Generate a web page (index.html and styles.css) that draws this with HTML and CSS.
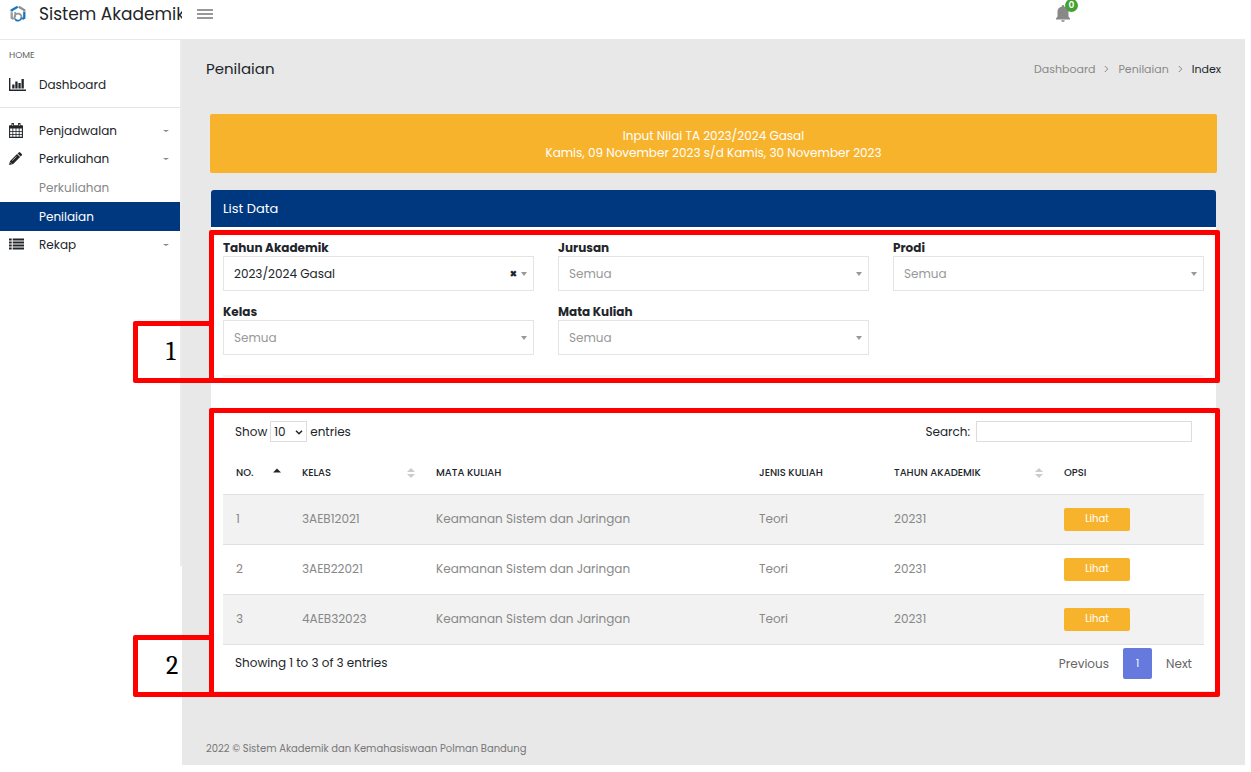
FILE: index.html
```html
<!DOCTYPE html>
<html lang="id">
<head>
  <meta charset="UTF-8">
  <meta name="viewport" content="width=device-width, initial-scale=1.0">
  <title>Sistem Akademik - Penilaian</title>
  <link rel="stylesheet" href="styles.css">
</head>
<body>

  <header class="topbar">
    <a class="brand" href="#">
      <svg class="brand-logo" viewBox="0 0 16 18" width="16" height="18" fill="none" stroke-width="2.3">
        <path d="M1.700 6.500V5.200L7.700 1.700" stroke="#1c75bc"/>
        <path d="M8.700 1.800l5.600 3.300v1.400" stroke="#8a8f94"/>
        <path d="M14.300 6.800v6l-2 1.200" stroke="#1c75bc"/>
        <path d="M1.700 7.200v5.600l2 1.200" stroke="#9a9a9a"/>
        <path d="M5.200 7v5" stroke="#9a9a9a" stroke-width="1.800"/>
        <path d="M5.200 14.200A3.500 3.500 0 1 1 11.400 13" stroke="#8f959b" stroke-width="1.800"/>
        <path d="M11.500 12.500A3.500 3.500 0 0 1 5.200 14.200" stroke="#1c75bc" stroke-width="1.800"/>
      </svg>
      <span>Sistem Akademik</span>
    </a>
    <button class="menu-toggle" type="button" aria-label="Menu">
      <svg viewBox="0 0 16 10" width="16" height="10" stroke="#777" stroke-width="1.4">
        <path d="M0 1h16M0 5h16M0 9h16"/>
      </svg>
    </button>
    <button class="bell" type="button" aria-label="Notifikasi">
      <svg viewBox="0 0 16 18" width="16" height="18" fill="#888">
        <path d="M8 0a1.200 1.200 0 0 1 1.200 1.200v.4C11.700 2.100 13.500 4.100 13.500 6.500v5l1.500 2v1H1v-1l1.500-2v-5c0-2.400 1.800-4.400 4.300-4.900v-.4A1.200 1.200 0 0 1 8 0zM6.200 15.200h3.600a1.800 1.800 0 0 1-3.600 0z"/>
      </svg>
      <span class="badge">0</span>
    </button>
  </header>

  <div class="layout">
    <aside class="sidebar">
      <nav class="menu">
        <p class="menu-title">HOME</p>
        <a class="menu-item" href="#">
          <svg class="menu-icon" viewBox="0 0 17 14" width="17" height="14" fill="#212529">
            <path d="M0 1h1.400v11.600H17V14H0zM3.200 7.500h2.300v4H3.200zM6.300 4.500h2.300v7H6.300zM9.400 6h2.300v5.500H9.400zM12.500 2h2.300v9.500h-2.300z"/>
          </svg>
          <span>Dashboard</span>
        </a>
        <hr class="menu-line">
        <a class="menu-item has-child" href="#">
          <svg class="menu-icon" viewBox="0 0 14 15" width="14" height="15">
            <path d="M.6 3h12.800v11.400H.6z" fill="#fff" stroke="#212529" stroke-width="1.100"/>
            <path d="M.5 2.500h13v3H.5z" fill="#212529"/>
            <path d="M.5 8.500h13M.5 11.500h13M3.800 5v9.500M7 5v9.500M10.200 5v9.500" stroke="#212529" stroke-width=".8"/>
            <path d="M2.500 0h2.400v3.600H2.500zM9.100 0h2.400v3.600H9.100z" fill="#212529"/>
            <path d="M3.700 1v2M10.300 1v2" stroke="#fff" stroke-width=".6"/>
          </svg>
          <span>Penjadwalan</span>
        </a>
        <a class="menu-item has-child" href="#">
          <svg class="menu-icon" viewBox="0 0 13 13" width="13" height="13" fill="#212529">
            <path d="M8.600 1.500l3 3 1.100-1.100a1 1 0 0 0 0-1.400L11.200.4a1 1 0 0 0-1.400 0zM8 2l3.100 3.100-6.900 6.900L0 13l1.100-4.100z"/>
            <path d="M1.500 10.400l1.200 1.200M3.200 8.700l4.300-4.300" stroke="#fff" stroke-width=".6"/>
          </svg>
          <span>Perkuliahan</span>
        </a>
        <a class="menu-item sub" href="#">Perkuliahan</a>
        <a class="menu-item sub active" href="#">Penilaian</a>
        <a class="menu-item has-child" href="#">
          <svg class="menu-icon" viewBox="0 0 15 12" width="15" height="12" stroke="#212529" stroke-width="2.200">
            <path d="M0 1.500h2.700M3.700 1.500H15M0 4.500h2.700M3.700 4.500H15M0 7.500h2.700M3.700 7.500H15M0 10.500h2.700M3.700 10.500H15"/>
          </svg>
          <span>Rekap</span>
        </a>
      </nav>
    </aside>

    <main class="content">
      <div class="page-head">
        <h1>Penilaian</h1>
        <nav class="breadcrumb">
          <a href="#">Dashboard</a>
          <svg viewBox="0 0 5 8" width="5" height="8"><path d="M.8 1l3 3-3 3"/></svg>
          <a href="#">Penilaian</a>
          <svg viewBox="0 0 5 8" width="5" height="8"><path d="M.8 1l3 3-3 3"/></svg>
          <b>Index</b>
        </nav>
      </div>

      <div class="banner">
        <p>Input Nilai TA 2023/2024 Gasal</p>
        <p>Kamis, 09 November 2023 s/d Kamis, 30 November 2023</p>
      </div>

      <section class="card">
        <h2 class="card-head">List Data</h2>

        <div class="filter">
          <div class="filter-grid">
            <div class="field">
              <label for="tahun">Tahun Akademik</label>
              <div class="select-wrap">
                <select id="tahun" class="filled"><option>2023/2024 Gasal</option></select>
                <button class="clear" type="button" aria-label="Hapus">×</button>
              </div>
            </div>
            <div class="field">
              <label for="jurusan">Jurusan</label>
              <div class="select-wrap">
                <select id="jurusan"><option>Semua</option></select>
              </div>
            </div>
            <div class="field">
              <label for="prodi">Prodi</label>
              <div class="select-wrap">
                <select id="prodi"><option>Semua</option></select>
              </div>
            </div>
            <div class="field">
              <label for="kelas">Kelas</label>
              <div class="select-wrap">
                <select id="kelas"><option>Semua</option></select>
              </div>
            </div>
            <div class="field">
              <label for="matkul">Mata Kuliah</label>
              <div class="select-wrap">
                <select id="matkul"><option>Semua</option></select>
              </div>
            </div>
          </div>
          <hr class="filter-line">
          <div class="mark"></div>
          <div class="mark-number">1</div>
        </div>

        <div class="list">
          <div class="list-tools">
            <div class="length">
              <label for="length">Show</label>
              <span class="length-wrap">
                <select id="length"><option>10</option></select>
                <svg class="chevron" viewBox="0 0 8 5" width="8" height="5" fill="none" stroke="#212529" stroke-width="1.500"><path d="M1 .8l3 3 3-3"/></svg>
              </span>
              <span>entries</span>
            </div>
            <div class="search">
              <label for="search">Search:</label>
              <input id="search" type="search">
            </div>
          </div>

          <table class="data">
            <thead>
              <tr>
                <th class="col-no"><div class="th">NO.<svg viewBox="0 0 8 10" width="8" height="10" fill="#212529"><path d="M0 4.500 4 .5l4 4z"/></svg></div></th>
                <th class="col-kelas"><div class="th">KELAS<svg viewBox="0 0 8 10" width="8" height="10" fill="#ccc"><path d="M0 4 4 0l4 4zM0 6h8l-4 4z"/></svg></div></th>
                <th>MATA KULIAH</th>
                <th class="col-jenis">JENIS KULIAH</th>
                <th class="col-tahun"><div class="th">TAHUN AKADEMIK<svg viewBox="0 0 8 10" width="8" height="10" fill="#ccc"><path d="M0 4 4 0l4 4zM0 6h8l-4 4z"/></svg></div></th>
                <th class="col-opsi">OPSI</th>
              </tr>
            </thead>
            <tbody>
              <tr>
                <td>1</td>
                <td>3AEB12021</td>
                <td>Keamanan Sistem dan Jaringan</td>
                <td>Teori</td>
                <td>20231</td>
                <td><button class="btn" type="button">Lihat</button></td>
              </tr>
              <tr>
                <td>2</td>
                <td>3AEB22021</td>
                <td>Keamanan Sistem dan Jaringan</td>
                <td>Teori</td>
                <td>20231</td>
                <td><button class="btn" type="button">Lihat</button></td>
              </tr>
              <tr>
                <td>3</td>
                <td>4AEB32023</td>
                <td>Keamanan Sistem dan Jaringan</td>
                <td>Teori</td>
                <td>20231</td>
                <td><button class="btn" type="button">Lihat</button></td>
              </tr>
            </tbody>
          </table>

          <div class="list-foot">
            <span>Showing 1 to 3 of 3 entries</span>
            <div class="pages">
              <a href="#">Previous</a>
              <a class="current" href="#">1</a>
              <a href="#">Next</a>
            </div>
          </div>
          <div class="mark"></div>
          <div class="mark-number">2</div>
        </div>
      </section>

      <footer class="footer">2022 © Sistem Akademik dan Kemahasiswaan Polman Bandung</footer>
    </main>
  </div>

</body>
</html>
```
FILE: styles.css
```css
* {
  box-sizing: border-box;
}
body {
  margin: 0;
  padding: 0 6px 7px 0;
  background-color: #fff;
  color: #212529;
  font-family: Poppins, Inter, sans-serif;
  font-size: 12px;
}
a {
  color: inherit;
  text-decoration: none;
}
h1, h2, p {
  margin: 0;
  font-weight: 400;
}
button, select, input {
  font: inherit;
  color: inherit;
}

/* top bar */
.topbar {
  display: flex;
  align-items: center;
  padding-bottom: 11px;
  border-bottom: 1px solid #e8e8e8;
}
.brand {
  display: flex;
  align-items: center;
  gap: 13px;
  width: 182px;
  padding-left: 10px;
  overflow: hidden;
  white-space: nowrap;
  font-size: 17px;
  line-height: 28px;
}
.brand-logo {
  flex: none;
}
.menu-toggle, .bell {
  display: flex;
  padding: 0;
  border: none;
  background: none;
  cursor: pointer;
}
.menu-toggle {
  margin-left: 15px;
}
.bell {
  position: relative;
  margin-left: auto;
  margin-right: 174px;
}
.badge {
  position: absolute;
  top: -6px;
  right: -7px;
  width: 13px;
  height: 13px;
  border-radius: 50%;
  background-color: #43a233;
  color: #fff;
  font-size: 9px;
  font-weight: 600;
  line-height: 13px;
  text-align: center;
}

/* sidebar */
.layout {
  display: flex;
}
.sidebar {
  flex: none;
  width: 182px;
}
.menu {
  padding-top: 6px;
  min-height: 526px;
  border-right: 2px solid #ebebeb;
}
.menu-title {
  padding-left: 9px;
  margin-bottom: 7px;
  color: #666;
  font-size: 9px;
  line-height: 18px;
}
.menu-item {
  display: flex;
  align-items: center;
  height: 28px;
  padding-left: 9px;
}
.menu-icon {
  flex: none;
  margin-bottom: 2px;
}
.menu-item span {
  position: absolute;
  margin-left: 30px;
}
.menu-line {
  margin: 8px 0 9px;
  border: none;
  border-top: 1px solid #e5e5e5;
}
.has-child::after {
  content: "";
  margin-left: auto;
  margin-right: 11px;
  border: 3px solid transparent;
  border-top: 2px solid #888;
  border-bottom: none;
}
.sub {
  height: 29px;
  padding-left: 39px;
  color: #888;
}
.sub.active {
  background-color: #003880;
  color: #fff;
}

/* content */
.content {
  flex: 1;
  min-width: 0;
  padding: 17px 24px 7px;
  background-color: #e8e8e8;
}
.page-head {
  display: flex;
  justify-content: space-between;
  align-items: center;
  margin-bottom: 33px;
  line-height: 24px;
}
.page-head h1 {
  font-size: 15px;
}
.breadcrumb {
  display: flex;
  align-items: center;
  gap: 9px;
  color: #888;
  font-size: 11px;
}
.breadcrumb svg {
  fill: none;
  stroke: #888;
}
.breadcrumb b {
  color: #212529;
  font-weight: 400;
}
.banner {
  margin: 0 4px 17px;
  padding: 13px 0 12px;
  border-radius: 2px;
  background-color: #f8b32d;
  color: #fff;
  line-height: 17px;
  text-align: center;
}
.card {
  margin: 0 5px;
  border-radius: 3px;
  background-color: #fff;
}
.card-head {
  padding: 0 12px;
  border-radius: 3px 3px 0 0;
  background-color: #003880;
  color: #fff;
  font-size: 13px;
  line-height: 37px;
}

/* filter */
.filter {
  position: relative;
  padding: 12px 12px 0;
}
.filter-grid {
  display: grid;
  grid-template-columns: repeat(3, 1fr);
  gap: 12px 24px;
}
.field label {
  display: block;
  font-weight: 700;
  line-height: 17px;
}
.select-wrap {
  position: relative;
}
.select-wrap select {
  display: block;
  width: 100%;
  height: 35px;
  padding: 0 10px;
  border: 1px solid #e4e4e4;
  border-radius: 0;
  background-color: #fff;
  color: #999;
  appearance: none;
}
.select-wrap select.filled {
  color: #212529;
}
.select-wrap::after {
  content: "";
  position: absolute;
  top: 16px;
  right: 7px;
  border: 3px solid transparent;
  border-top: 4px solid #999;
  border-bottom: none;
  pointer-events: none;
}
.clear {
  position: absolute;
  top: 10px;
  right: 17px;
  padding: 0;
  border: none;
  background: none;
  font-weight: 800;
  line-height: 15px;
  cursor: pointer;
}
.filter-line {
  height: 2px;
  margin: 20px 0 0;
  border: none;
  background-color: #f3f3f3;
}

/* red marks */
.mark {
  position: absolute;
  top: 3px;
  right: -4px;
  bottom: -6px;
  left: -2px;
  border: 5px solid #f00;
  border-radius: 2px;
  pointer-events: none;
}
.list .mark {
  top: 0;
}
.mark-number {
  position: absolute;
  bottom: -6px;
  left: -78px;
  width: 81px;
  height: 62px;
  padding-left: 28px;
  border: 5px solid #f00;
  border-radius: 2px;
  color: #000;
  font-family: Cambria, "Liberation Serif", serif;
  font-size: 26px;
  line-height: 52px;
}

/* table */
.list {
  position: relative;
  margin-top: 31px;
  padding: 13px 12px 12px;
}
.list-tools {
  display: flex;
  justify-content: space-between;
  padding: 0 12px;
}
.length, .search {
  display: flex;
  align-items: center;
  gap: 3px;
}
.search {
  gap: 6px;
}
.length-wrap {
  position: relative;
}
.length select {
  display: block;
  width: 37px;
  height: 21px;
  padding: 0 3px;
  border: 1px solid #ddd;
  border-radius: 0;
  background-color: #fff;
  appearance: none;
}
.chevron {
  position: absolute;
  top: 9px;
  right: 4px;
  pointer-events: none;
}
.search input {
  width: 216px;
  height: 21px;
  padding: 0 4px;
  border: 1px solid #ddd;
  border-radius: 0;
}
.data {
  width: 100%;
  margin-top: 11px;
  border-collapse: collapse;
  table-layout: fixed;
}
.data th {
  height: 41px;
  padding: 0 8px 0 13px;
  font-size: 10px;
  font-weight: 500;
  text-align: left;
}
.data td {
  height: 50px;
  padding: 0 13px;
  border-top: 1px solid #e0e0e0;
  border-bottom: 1px solid #e0e0e0;
  color: #888;
}
.data tbody tr:nth-child(odd) {
  background-color: #f2f2f2;
}
.th {
  display: flex;
  justify-content: space-between;
  align-items: center;
}
.col-no {
  width: 66px;
}
.col-kelas {
  width: 134px;
}
.col-jenis {
  width: 135px;
}
.col-tahun {
  width: 170px;
}
.col-opsi {
  width: 153px;
}
.btn {
  display: block;
  width: 66px;
  height: 23px;
  padding: 0;
  border: none;
  border-radius: 2px;
  background-color: #f8b32d;
  color: #fff;
  font-size: 10px;
  cursor: pointer;
}
.list-foot {
  display: flex;
  justify-content: space-between;
  align-items: center;
  margin-top: 3px;
  padding: 0 12px;
}
.pages {
  display: flex;
  gap: 14px;
  color: #666;
  line-height: 31px;
}
.pages .current {
  width: 29px;
  border-radius: 2px;
  background-color: #667add;
  color: #fff;
  font-size: 10px;
  text-align: center;
}
.footer {
  margin-top: 49px;
  color: #777;
  font-size: 10px;
  line-height: 18px;
}
```
